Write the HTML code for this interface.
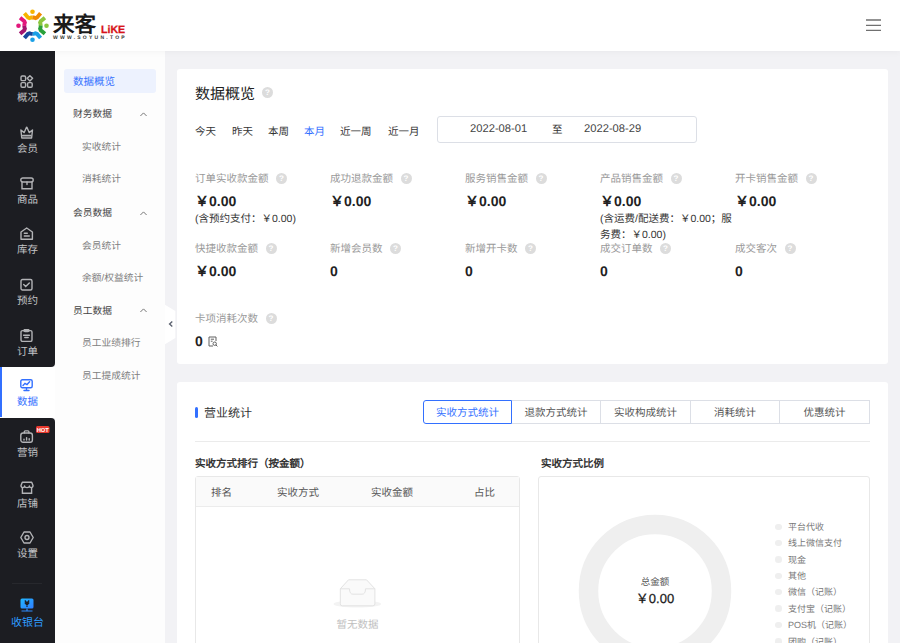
<!DOCTYPE html>
<html lang="zh-CN"><head><meta charset="utf-8">
<style>
*{margin:0;padding:0;box-sizing:border-box;}
html,body{width:900px;height:643px;overflow:hidden;}
body{font-family:"Liberation Sans",sans-serif;text-rendering:geometricPrecision;background:#f2f2f5;position:relative;color:#333;}
.abs{position:absolute;white-space:nowrap;}
#header{position:absolute;left:0;top:0;width:900px;height:51px;background:#fff;z-index:5;box-shadow:0 1px 7px rgba(0,0,0,0.045);}
#side1{position:absolute;left:0;top:51px;width:55px;height:592px;background:#fff;}
#side2{position:absolute;left:55px;top:51px;width:110px;height:592px;background:#fdfdfd;}
.dark{position:absolute;left:0;width:55px;background:#1c1d22;}
.nav{position:absolute;left:0;width:55px;height:51px;font-size:10.5px;}
.nav .t{position:absolute;left:0;width:55px;text-align:center;top:30px;line-height:14px;}
.card{position:absolute;left:177px;width:711px;background:#fff;border-radius:3px;}
.s2 .it{position:absolute;font-size:9.75px;white-space:nowrap;line-height:12px;}
.chev{position:absolute;left:85px;width:7px;height:7px;}
.lbl{position:absolute;font-size:10.5px;color:#999;white-space:nowrap;line-height:12px;}
.val{position:absolute;font-size:14px;font-weight:bold;color:#222;white-space:nowrap;line-height:14px;}
.sub{position:absolute;font-size:10.5px;color:#333;white-space:nowrap;line-height:12px;}
.q{display:inline-block;width:11px;height:11px;border-radius:50%;background:#dcdcdc;color:#fff;font-size:8px;line-height:11px;text-align:center;font-weight:bold;vertical-align:top;margin-left:7.5px;margin-top:-0.5px;}
.day{position:absolute;top:125.5px;font-size:10.5px;color:#333;line-height:12px;white-space:nowrap;}
.tab{position:absolute;top:400px;height:24px;border:1px solid #dcdfe6;border-left:none;font-size:10.5px;color:#555;text-align:center;line-height:24px;background:#fff;}
.tab.on{border:1px solid #3370ff;color:#3370ff;border-radius:3px 0 0 3px;z-index:2;}
.tab:last-child{border-radius:0 3px 3px 0;}
.th{position:absolute;top:487px;font-size:10.5px;color:#555;line-height:12px;white-space:nowrap;}
.lg{position:absolute;left:788px;font-size:9px;color:#777;line-height:12px;white-space:nowrap;}
.lg i{position:absolute;left:-13px;top:2.5px;width:6.5px;height:6.5px;border-radius:50%;background:#efefef;}
</style></head>
<body>
<div id="header">
  <svg class="abs" style="left:0;top:0" width="60" height="51" viewBox="0 0 60 51" fill="none" stroke-width="3.9" stroke-linejoin="miter"><path d="M24.44 13.29 L27.94 17.48 L29.43 18.10 L30.52 17.74 L31.50 17.56 L32.59 17.50" stroke="#f6b400"/><path d="M32.41 17.50 L33.50 17.56 L34.48 17.74 L35.57 18.10 L37.06 17.48 L40.56 13.29" stroke="#f18a00"/><circle cx="32.50" cy="11.70" r="2.3" fill="#f6b400" stroke="none"/><path d="M44.91 17.64 L40.72 21.14 L40.10 22.63 L40.46 23.72 L40.64 24.70 L40.70 25.79" stroke="#8cc63f"/><path d="M40.70 25.61 L40.64 26.70 L40.46 27.68 L40.10 28.77 L40.72 30.26 L44.91 33.76" stroke="#2aa03a"/><circle cx="46.50" cy="25.70" r="2.3" fill="#8cc63f" stroke="none"/><path d="M40.56 38.11 L37.06 33.92 L35.57 33.30 L34.48 33.66 L33.50 33.84 L32.41 33.90" stroke="#1ba0e6"/><path d="M32.59 33.90 L31.50 33.84 L30.52 33.66 L29.43 33.30 L27.94 33.92 L24.44 38.11" stroke="#17479c"/><circle cx="32.50" cy="39.70" r="2.3" fill="#1ba0e6" stroke="none"/><path d="M20.09 33.76 L24.28 30.26 L24.90 28.77 L24.54 27.68 L24.36 26.70 L24.30 25.61" stroke="#a3156e"/><path d="M24.30 25.79 L24.36 24.70 L24.54 23.72 L24.90 22.63 L24.28 21.14 L20.09 17.64" stroke="#e2187c"/><circle cx="18.50" cy="25.70" r="2.3" fill="#e2187c" stroke="none"/></svg>
  <div class="abs" style="left:53px;top:12.5px;font-size:21.5px;font-weight:bold;color:#1a1a1a;line-height:24px;">来客</div>
  <div class="abs" style="left:101px;top:25px;font-size:10.6px;font-weight:bold;color:#d7141a;line-height:10px;-webkit-text-stroke:0.3px #d7141a">LiKE</div>
  <div class="abs" style="left:53px;top:35px;font-size:5px;font-weight:bold;color:#333;line-height:6px;letter-spacing:2.25px">WWW.SOYUN.TOP</div>
  <svg class="abs" style="left:865px;top:17px" width="17" height="16" viewBox="0 0 17 16" stroke="#707070" stroke-width="1.3"><path d="M1 3 H16 M1 8.3 H16 M1 13.4 H16"/></svg>
</div>

<div class="dark" style="top:51px;height:316px;border-bottom-right-radius:4px"></div>
<div class="abs" style="left:0;top:367px;width:55px;height:51px;background:#fff"></div>
<div class="dark" style="top:418px;height:225px;border-top-right-radius:4px"></div>
<div class="abs" style="left:0;top:367px;width:2px;height:50px;background:#3370ff"></div>
<div class="nav" style="top:61px;color:#c3c4c7"><svg width="14" height="14" viewBox="0 0 14 14" style="position:absolute;left:20px;top:14px" fill="none" stroke="#b2b3b6" stroke-width="1.4" stroke-linecap="round"><rect x="1" y="1" width="4.6" height="4.6" rx="1.2"/><rect x="1" y="7.6" width="4.6" height="4.6" rx="1.2"/><rect x="7.6" y="7.6" width="4.6" height="4.6" rx="1.2"/><path d="M9.9 0.7 L12.6 3.3 L9.9 6 L7.2 3.3 Z" stroke-linejoin="round"/></svg><div class="t">概况</div></div>
<div class="nav" style="top:112px;color:#c3c4c7"><svg width="14" height="14" viewBox="0 0 14 14" style="position:absolute;left:20px;top:14px" fill="none" stroke="#b2b3b6" stroke-width="1.4" stroke-linecap="round"><path d="M0.9 4 L4.2 6.6 L6.4 1.4 Q6.7 0.8 7 1.4 L9.2 6.6 L12.5 4 L11.6 12 H1.8 Z" stroke-linejoin="round"/><path d="M2.8 9.6 H10.6" stroke-width="1.7"/></svg><div class="t">会员</div></div>
<div class="nav" style="top:163px;color:#c3c4c7"><svg width="14" height="14" viewBox="0 0 14 14" style="position:absolute;left:20px;top:14px" fill="none" stroke="#b2b3b6" stroke-width="1.4" stroke-linecap="round"><rect x="0.8" y="1" width="12.4" height="4" rx="2"/><path d="M2 5 V11.8 H12 V5 M7 5 V7.5"/></svg><div class="t">商品</div></div>
<div class="nav" style="top:213px;color:#c3c4c7"><svg width="14" height="14" viewBox="0 0 14 14" style="position:absolute;left:20px;top:14px" fill="none" stroke="#b2b3b6" stroke-width="1.4" stroke-linecap="round"><path d="M1 5 L6.7 1 L12.4 5 V12.3 H1 Z" stroke-linejoin="round"/><path d="M4.3 6.3 H7.3 M4.3 9 H9.3"/></svg><div class="t">库存</div></div>
<div class="nav" style="top:264px;color:#c3c4c7"><svg width="14" height="14" viewBox="0 0 14 14" style="position:absolute;left:20px;top:14px" fill="none" stroke="#b2b3b6" stroke-width="1.4" stroke-linecap="round"><rect x="1" y="1.5" width="11" height="10.5" rx="1.5"/><path d="M3.7 6.5 L5.7 8.5 L9.3 5"/></svg><div class="t">预约</div></div>
<div class="nav" style="top:315px;color:#c3c4c7"><svg width="14" height="14" viewBox="0 0 14 14" style="position:absolute;left:20px;top:14px" fill="none" stroke="#b2b3b6" stroke-width="1.4" stroke-linecap="round"><rect x="1" y="1.6" width="11" height="10.8" rx="1.5"/><rect x="4" y="0.6" width="5" height="2" rx="1"/><path d="M3.6 6.2 H9.4 M4.8 8.5 H8.2"/></svg><div class="t">订单</div></div>
<div class="nav" style="top:365px;color:#3370ff"><svg width="14" height="14" viewBox="0 0 14 14" style="position:absolute;left:20px;top:14px" fill="none" stroke="#3370ff" stroke-width="1.4" stroke-linecap="round"><rect x="0.8" y="0.8" width="11.4" height="8" rx="1.5"/><path d="M3 6.4 L5 4.3 L7 5.6 L9.6 2.8 M4 11.5 H9 M6.5 8.8 V11.5"/></svg><div class="t">数据</div></div>
<div class="nav" style="top:416px;color:#c3c4c7"><svg width="14" height="14" viewBox="0 0 14 14" style="position:absolute;left:20px;top:14px" fill="none" stroke="#b2b3b6" stroke-width="1.4" stroke-linecap="round"><rect x="0.8" y="3" width="11.6" height="9.2" rx="2.2"/><path d="M4.3 3 V1.8 Q4.3 0.9 5.2 0.9 H8 Q8.9 0.9 8.9 1.8 V3 M4 10 V9.3 M6.6 10 V7.6 M9.2 10 V8.6"/></svg><div class="t">营销</div></div>
<div class="nav" style="top:467px;color:#c3c4c7"><svg width="14" height="14" viewBox="0 0 14 14" style="position:absolute;left:20px;top:14px" fill="none" stroke="#b2b3b6" stroke-width="1.4" stroke-linecap="round"><path d="M2.3 1.2 H11.7 L13 4.6 Q13 6.6 11.2 6.6 Q9.5 6.6 9.4 5 Q9.2 6.6 7 6.6 Q4.8 6.6 4.6 5 Q4.5 6.6 2.8 6.6 Q1 6.6 1 4.6 Z" stroke-linejoin="round"/><path d="M2.4 6.6 V12.2 H11.6 V6.6"/></svg><div class="t">店铺</div></div>
<div class="nav" style="top:517px;color:#c3c4c7"><svg width="14" height="14" viewBox="0 0 14 14" style="position:absolute;left:20px;top:14px" fill="none" stroke="#b2b3b6" stroke-width="1.4" stroke-linecap="round"><path d="M4 1 H10 L13.2 6.5 L10 12 H4 L0.8 6.5 Z" stroke-linejoin="round"/><circle cx="7" cy="6.5" r="2"/></svg><div class="t">设置</div></div>
<svg class="abs" style="left:36px;top:426px" width="13.5" height="7" viewBox="0 0 13.5 7"><rect width="13.5" height="7" rx="1.5" fill="#e8392e"/><text x="6.75" y="5.6" text-anchor="middle" font-family="Liberation Sans" font-weight="bold" font-size="5.8" fill="#fff">HOT</text></svg>
<div class="abs" style="left:12px;top:583px;width:30px;height:1px;background:#27282d"></div>
<svg class="abs" style="left:20px;top:598px" width="14" height="14" viewBox="0 0 14 14"><defs><linearGradient id="g1" x1="0" y1="0" x2="1" y2="1"><stop offset="0" stop-color="#22b8ff"/><stop offset="1" stop-color="#2f7dff"/></linearGradient></defs><rect x="0.5" y="0.5" width="13" height="10" rx="1.5" fill="url(#g1)"/><path d="M4.8 2.5 L7 5 L9.2 2.5 M4.8 4.5 L7 7 L9.2 4.5 M7 5 V9" stroke="#1d1e23" stroke-width="1.2" fill="none"/><path d="M7 10.5 V12.6 M1.5 13 H12.5" stroke="#2f8dff" stroke-width="1.2"/></svg>
<div class="abs" style="left:0;top:615.5px;width:55px;text-align:center;font-size:11px;color:#2e9bff;line-height:14px">收银台</div>

<div id="side2" class="s2">
  <div class="abs" style="left:9px;top:18px;width:92px;height:24px;background:#edf2fe;border-radius:3px"></div>
  <div class="it" style="left:18px;top:25px;color:#3370ff;font-size:10.5px">数据概览</div>
  <div class="it" style="left:18px;top:57.5px;color:#444">财务数据</div>
  <div class="it" style="left:27px;top:91px;color:#808080">实收统计</div>
  <div class="it" style="left:27px;top:123px;color:#808080">消耗统计</div>
  <div class="it" style="left:18px;top:156.5px;color:#444">会员数据</div>
  <div class="it" style="left:27px;top:189.5px;color:#808080">会员统计</div>
  <div class="it" style="left:27px;top:222px;color:#808080">余额/权益统计</div>
  <div class="it" style="left:18px;top:255px;color:#444">员工数据</div>
  <div class="it" style="left:27px;top:287px;color:#808080">员工业绩排行</div>
  <div class="it" style="left:27px;top:320px;color:#808080">员工提成统计</div>
  <svg class="chev" style="top:59.5px" viewBox="0 0 7 7"><path d="M0.4 5 L3.5 1.9 L6.6 5" fill="none" stroke="#777" stroke-width="1"/></svg>
  <svg class="chev" style="top:158.5px" viewBox="0 0 7 7"><path d="M0.4 5 L3.5 1.9 L6.6 5" fill="none" stroke="#777" stroke-width="1"/></svg>
  <svg class="chev" style="top:256px" viewBox="0 0 7 7"><path d="M0.4 5 L3.5 1.9 L6.6 5" fill="none" stroke="#777" stroke-width="1"/></svg>
</div>
<svg class="abs" style="left:165px;top:304px" width="11" height="41" viewBox="0 0 11 41"><path d="M0 0.8 L10.3 7 V34 L0 40.2 Z" fill="#fff"/><path d="M7.3 17.6 L4.6 20 L7.3 22.4" fill="none" stroke="#5c6270" stroke-width="1.4"/></svg>

<div class="card" style="top:69px;height:295px"></div>
<div class="abs" style="left:195px;top:85px;font-size:15px;color:#222;line-height:20px">数据概览</div><span class="q abs" style="left:262px;top:87px;margin:0">?</span>
<div class="day" style="left:195px">今天</div>
<div class="day" style="left:232px">昨天</div>
<div class="day" style="left:268px">本周</div>
<div class="day" style="left:304px;color:#3370ff">本月</div>
<div class="day" style="left:340px">近一周</div>
<div class="day" style="left:388px">近一月</div>
<div class="abs" style="left:437px;top:115.5px;width:260px;height:27px;border:1px solid #dcdfe6;border-radius:3px"></div>
<div class="abs" style="left:470px;top:122.5px;font-size:11.2px;color:#444;line-height:12px">2022-08-01</div>
<div class="abs" style="left:552px;top:123.5px;font-size:10.5px;color:#333;line-height:12px">至</div>
<div class="abs" style="left:584px;top:122.5px;font-size:11.2px;color:#444;line-height:12px">2022-08-29</div>
<div class="lbl" style="left:195px;top:173px">订单实收款金额<span class="q">?</span></div>
<div class="val" style="left:195px;top:194px">￥0.00</div>
<div class="sub" style="left:195px;top:213px">(含预约支付：￥0.00)</div>
<div class="lbl" style="left:330px;top:173px">成功退款金额<span class="q">?</span></div>
<div class="val" style="left:330px;top:194px">￥0.00</div>
<div class="lbl" style="left:465px;top:173px">服务销售金额<span class="q">?</span></div>
<div class="val" style="left:465px;top:194px">￥0.00</div>
<div class="lbl" style="left:600px;top:173px">产品销售金额<span class="q">?</span></div>
<div class="val" style="left:600px;top:194px">￥0.00</div>
<div class="sub" style="left:600px;top:213px">(含运费/配送费：￥0.00；服</div>
<div class="sub" style="left:600px;top:229px">务费：￥0.00)</div>
<div class="lbl" style="left:735px;top:173px">开卡销售金额<span class="q">?</span></div>
<div class="val" style="left:735px;top:194px">￥0.00</div>
<div class="lbl" style="left:195px;top:243px">快捷收款金额<span class="q">?</span></div>
<div class="val" style="left:195px;top:264px">￥0.00</div>
<div class="lbl" style="left:330px;top:243px">新增会员数<span class="q">?</span></div>
<div class="val" style="left:330px;top:264px">0</div>
<div class="lbl" style="left:465px;top:243px">新增开卡数<span class="q">?</span></div>
<div class="val" style="left:465px;top:264px">0</div>
<div class="lbl" style="left:600px;top:243px">成交订单数<span class="q">?</span></div>
<div class="val" style="left:600px;top:264px">0</div>
<div class="lbl" style="left:735px;top:243px">成交客次<span class="q">?</span></div>
<div class="val" style="left:735px;top:264px">0</div>
<div class="lbl" style="left:195px;top:313px">卡项消耗次数<span class="q">?</span></div>
<div class="val" style="left:195px;top:334px">0</div>
<svg class="abs" style="left:208px;top:336px" width="10" height="11" viewBox="0 0 10 11" fill="none" stroke="#606060" stroke-width="1"><path d="M8 5 V1 H1 V10 H5 M2.8 3.2 H6 M2.8 5.2 H4.6"/><circle cx="6.7" cy="7.7" r="1.7"/><path d="M7.9 8.9 L9.4 10.4"/></svg>

<div class="card" style="top:382px;height:270px"></div>
<div class="abs" style="left:195px;top:407px;width:3px;height:11px;background:#3370ff;border-radius:2px"></div>
<div class="abs" style="left:204px;top:405px;font-size:12px;color:#333;line-height:16px">营业统计</div>
<div class="tab on" style="left:423px;width:89px">实收方式统计</div>
<div class="tab" style="left:512px;width:89px">退款方式统计</div>
<div class="tab" style="left:601px;width:90px">实收构成统计</div>
<div class="tab" style="left:691px;width:89px">消耗统计</div>
<div class="tab" style="left:780px;width:90px">优惠统计</div>
<div class="abs" style="left:195px;top:441px;width:675px;height:1px;background:#ebebeb"></div>
<div class="abs" style="left:195px;top:456.5px;font-size:10.5px;font-weight:bold;color:#333;line-height:14px">实收方式排行（按金额）</div>
<div class="abs" style="left:541px;top:456.5px;font-size:10.5px;font-weight:bold;color:#333;line-height:14px">实收方式比例</div>
<div class="abs" style="left:195px;top:476px;width:325px;height:200px;border:1px solid #e8e8e8;border-radius:3px;background:#fff"></div>
<div class="abs" style="left:196px;top:477px;width:323px;height:30px;background:#fafafa;border-bottom:1px solid #ececec"></div>
<div class="th" style="left:211px">排名</div>
<div class="th" style="left:277px">实收方式</div>
<div class="th" style="left:371px">实收金额</div>
<div class="th" style="left:474px">占比</div>
<svg class="abs" style="left:333px;top:578px" width="49" height="32" viewBox="0 0 49 32"><ellipse cx="24.3" cy="26" rx="23.8" ry="3.6" fill="#f3f3f3"/><path d="M7.3 10.8 L15.5 1.8 H33.5 L41.9 10.8 V25.8 Q41.9 27.8 39.9 27.8 H9.3 Q7.3 27.8 7.3 25.8 Z" fill="#fafafa" stroke="#e3e3e3" stroke-width="1"/><path d="M7.3 10.8 H16.5 Q16.5 16.2 20 16.2 H29 Q32.5 16.2 32.5 10.8 H41.9" fill="none" stroke="#e3e3e3" stroke-width="1"/></svg>
<div class="abs" style="left:336.5px;top:618.5px;font-size:10.5px;color:#bfbfbf;line-height:12px">暂无数据</div>

<div class="abs" style="left:538px;top:476px;width:332px;height:200px;border:1px solid #e8e8e8;border-radius:3px;background:#fff"></div>
<svg class="abs" style="left:578px;top:514px" width="154" height="154" viewBox="0 0 154 154"><circle cx="77" cy="77" r="66.5" fill="none" stroke="#efefef" stroke-width="19.5"/></svg>
<div class="abs" style="left:605px;top:577px;width:100px;text-align:center;font-size:9.5px;color:#555;line-height:12px">总金额</div>
<div class="abs" style="left:605px;top:591px;width:100px;text-align:center;font-size:13px;font-weight:normal;color:#1a1a1a;line-height:16px;-webkit-text-stroke:0.25px #1a1a1a">￥0.00</div>
<div class="lg" style="top:521.0px"><i></i>平台代收</div>
<div class="lg" style="top:537.4px"><i></i>线上微信支付</div>
<div class="lg" style="top:553.7px"><i></i>现金</div>
<div class="lg" style="top:570.0px"><i></i>其他</div>
<div class="lg" style="top:586.4px"><i></i>微信（记账）</div>
<div class="lg" style="top:602.8px"><i></i>支付宝（记账）</div>
<div class="lg" style="top:619.1px"><i></i>POS机（记账）</div>
<div class="lg" style="top:635.5px"><i></i>团购（记账）</div>
</body></html>
